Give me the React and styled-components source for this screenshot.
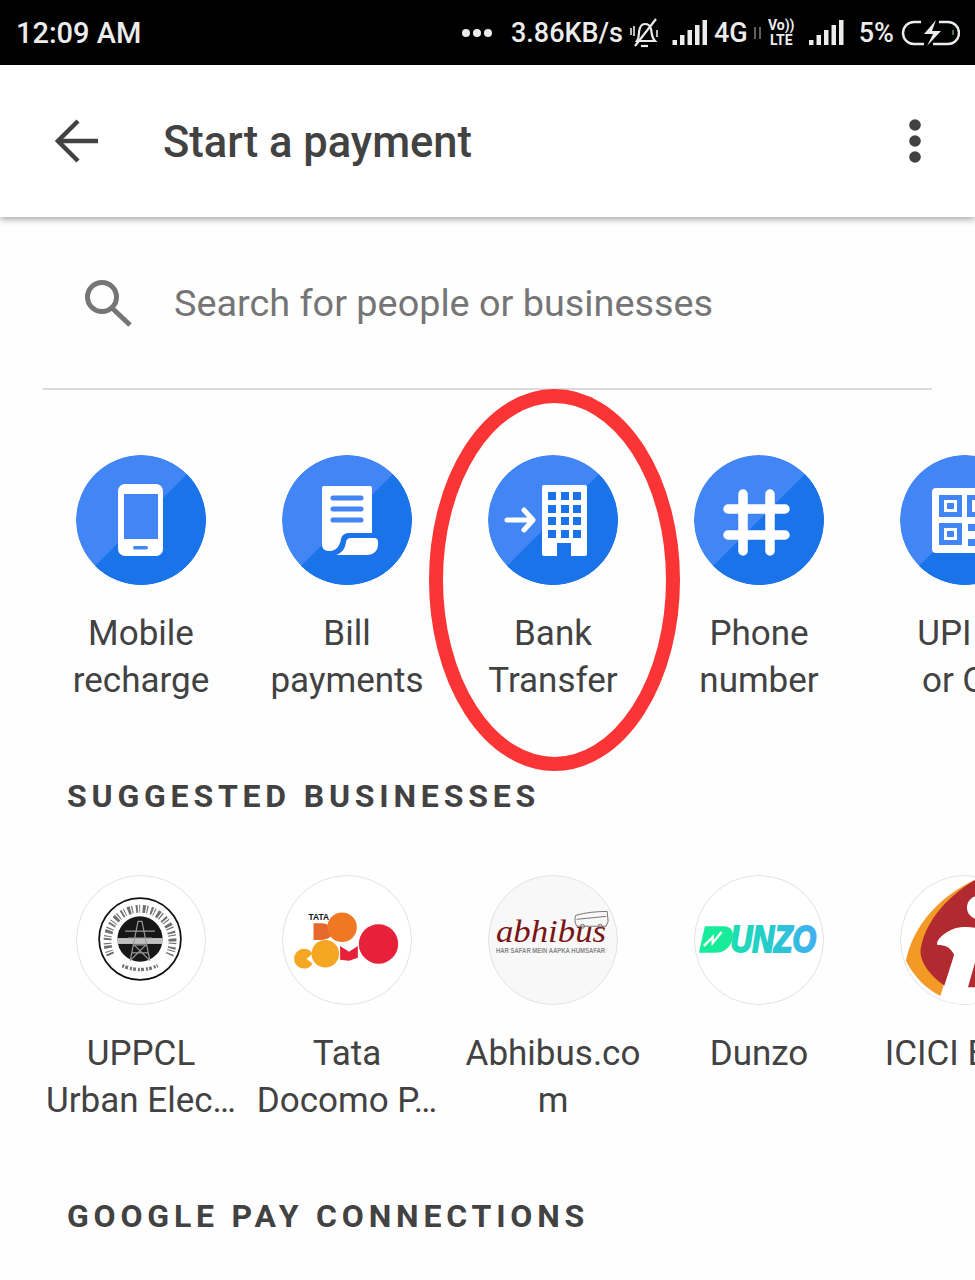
import styled, { createGlobalStyle } from 'styled-components'

const GlobalStyle = createGlobalStyle`
  html, body {
    background: #fff;
    margin: 0;
    padding: 0;
  }
`

const Page = styled.div`
  background: #fefefe;
  font-family: Roboto, "Liberation Sans", sans-serif;
  height: 1280px;
  overflow: hidden;
  position: relative;
  width: 975px;
`

const StatusBar = styled.div`
  align-items: center;
  background: #000;
  color: #ececec;
  display: flex;
  font-weight: 500;
  height: 65px;
  justify-content: space-between;
  padding: 0 15px 0 16px;
`

const Clock = styled.span`
  font-size: 29px;
`

const StatusIcons = styled.div`
  align-items: center;
  display: flex;
`

const StatusText = styled.span`
  font-size: ${props => props.$size || 27}px;
  margin-left: ${props => props.$gap || 0}px;
`

const StatusGlyph = styled.svg`
  display: block;
  flex: none;
  margin-left: ${props => props.$gap || 0}px;
`

const VoLteBox = styled.div`
  display: flex;
  flex-direction: column;
  font-size: 14px;
  font-weight: 700;
  line-height: 15px;
  margin-left: 5px;
  text-align: center;
  width: 29px;
`

const Header = styled.header`
  align-items: center;
  background: #fff;
  box-shadow: 0 3px 6px rgba(0, 0, 0, 0.3);
  display: flex;
  height: 152px;
  padding: 0 54px 0 55px;
  position: relative;
`

const Title = styled.h1`
  color: #424242;
  flex: 1;
  font-size: 43.5px;
  font-weight: 500;
  margin: 0 0 0 64px;
  padding-top: 3px;
`

const SearchRow = styled.div`
  align-items: center;
  box-sizing: border-box;
  display: flex;
  height: 171px;
  padding: 0 0 0 84px;
`

const Placeholder = styled.span`
  color: #757575;
  font-size: 37.8px;
  margin-left: 42px;
`

const Divider = styled.div`
  background: #dcdcdc;
  height: 2px;
  margin: 0 43px;
`

const TileRow = styled.div`
  display: flex;
  padding: ${props => props.$top}px 0 0 38px;
  width: 1100px;
`

const Tile = styled.div`
  align-items: center;
  display: flex;
  flex: none;
  flex-direction: column;
  width: 206px;
`

const Disc = styled.div`
  border-radius: 50%;
  box-sizing: border-box;
  flex: none;
  height: 130px;
  overflow: hidden;
  width: 130px;
  ${props => props.$outlined && `
    background: ${props.$tint || '#fff'};
    border: 1.5px solid #e2e2e2;
  `}
`

const DiscArt = styled.svg`
  display: block;
  height: 100%;
  width: 100%;
`

const TileLabel = styled.div`
  color: #424242;
  font-size: 35px;
  line-height: 47px;
  margin-top: 25px;
  text-align: center;
  white-space: nowrap;
`

const SectionHeading = styled.h2`
  color: #424242;
  font-size: 32px;
  font-weight: 700;
  height: 40px;
  letter-spacing: 4.8px;
  line-height: 40px;
  margin: 72px 0 0 67px;
`

const BusinessRowBox = styled(TileRow)`
  height: 249px;
`

const Annotation = styled.svg`
  left: 425px;
  pointer-events: none;
  position: absolute;
  top: 385px;
`

const BLUE_LIGHT = '#4285f4'
const BLUE_DARK = '#1a73e8'

const SignalBars = () => (
  <>
    <rect x='0' y='20' width='4.5' height='5' />
    <rect x='7.5' y='15' width='4.5' height='10' />
    <rect x='15' y='10' width='4.5' height='15' />
    <rect x='22.5' y='5' width='4.5' height='20' />
    <rect x='30' y='0' width='4.5' height='25' />
  </>
)

const VoLte = () => (
  <VoLteBox>
    <span>Vo))</span>
    <span>LTE</span>
  </VoLteBox>
)

const Status = () => (
  <StatusBar>
    <Clock>12:09 AM</Clock>
    <StatusIcons>
      <StatusGlyph width='30' height='10' viewBox='0 0 30 10' fill='#ececec'>
        <circle cx='4' cy='5' r='4' />
        <circle cx='15' cy='5' r='4' />
        <circle cx='26' cy='5' r='4' />
      </StatusGlyph>
      <StatusText $gap={19}>3.86KB/s</StatusText>
      <StatusGlyph $gap={6} width='30' height='34' viewBox='0 0 30 34' fill='none' stroke='#ececec' strokeWidth='2.2'>
        <path d='M8 25c3-4 1-9 3-13 1-3 3-4 5-4s5 1 6 5c1 4 0 8 4 12H8z' />
        <path d='M12 30h7' />
        <path d='M6 30L27 3' />
        <path d='M2 12v7M5 10v10M28 14v7' strokeWidth='1.6' />
      </StatusGlyph>
      <StatusGlyph $gap={13} width='36' height='25' viewBox='0 0 35 25' fill='#ececec'>
        <SignalBars />
      </StatusGlyph>
      <StatusText $gap={6}>4G</StatusText>
      <StatusGlyph $gap={5} width='9' height='14' viewBox='0 0 9 14' stroke='#777' strokeWidth='1.6'>
        <path d='M2 1v12M7 1v12' />
      </StatusGlyph>
      <VoLte />
      <StatusGlyph $gap={13} width='35' height='25' viewBox='0 0 35 25' fill='#ececec'>
        <SignalBars />
      </StatusGlyph>
      <StatusText $gap={15}>5%</StatusText>
      <StatusGlyph $gap={7} width='59' height='26' viewBox='0 0 59 26' fill='none'>
        <path d='M20 2H13a11 11 0 0 0 0 22h10M38 2h9a10 10 0 0 1 0 22H32' stroke='#ececec' strokeWidth='2.4' />
        <path d='M35 0L23 14h9l-6 12 14-15h-9z' fill='#ececec' />
        <rect x='51' y='10' width='2' height='5' fill='#3f7a3f' />
      </StatusGlyph>
    </StatusIcons>
  </StatusBar>
)

const TopBar = () => (
  <Header>
    <svg width='44' height='44' viewBox='0 0 44 44' fill='none' stroke='#424242' strokeWidth='4.5'>
      <path d='M43 22H4' />
      <path d='M23 2L3 22l20 20' />
    </svg>
    <Title>Start a payment</Title>
    <svg width='12' height='44' viewBox='0 0 12 44' fill='#424242'>
      <circle cx='6' cy='6' r='5.8' />
      <circle cx='6' cy='22' r='5.8' />
      <circle cx='6' cy='38' r='5.8' />
    </svg>
  </Header>
)

const Search = () => (
  <SearchRow>
    <svg width='48' height='48' viewBox='0 0 48 48' fill='none' stroke='#757575' strokeWidth='5'>
      <circle cx='18' cy='18' r='14.5' />
      <path d='M28 29l18 17' />
    </svg>
    <Placeholder>Search for people or businesses</Placeholder>
  </SearchRow>
)

const ActionDisc = ({ children }) => (
  <Disc>
    <DiscArt viewBox='0 0 130 130'>
      <circle cx='65' cy='65' r='65' fill={BLUE_LIGHT} />
      <path d='M111 19A65 65 0 0 1 19 111Z' fill={BLUE_DARK} />
      {children}
    </DiscArt>
  </Disc>
)

const PhoneIcon = () => (
  <>
    <rect x='42' y='29' width='45' height='72' rx='7' fill='#fff' />
    <rect x='48' y='39' width='34' height='45' fill={BLUE_LIGHT} />
    <rect x='57' y='91' width='15' height='3.5' rx='1.7' fill={BLUE_LIGHT} />
  </>
)

const BillIcon = () => (
  <>
    <path d='M42 31H88a2 2 0 0 1 2 2V78H66a7 7 0 0 0-7 6c-1 7-5 12-11 12h-2a6 6 0 0 1-6-6V33a2 2 0 0 1 2-2z' fill='#fff' />
    <path d='M68 83H92a4 4 0 0 1 4 4v3a10 10 0 0 1-10 10H54c6-2 9-6 10-13a5 5 0 0 1 4-4z' fill='#fff' />
    <path d='M51 43H79M51 54H79M51 65H79' stroke={BLUE_LIGHT} strokeWidth='5' strokeLinecap='round' />
  </>
)

const WINDOW_ROWS = [37, 50, 62, 75]
const WINDOW_COLS = [60, 73, 85]

const BankIcon = () => (
  <>
    <path d='M56 30H97a2 2 0 0 1 2 2V99a2 2 0 0 1-2 2H83V88H69V101H56a2 2 0 0 1-2-2V32a2 2 0 0 1 2-2z' fill='#fff' />
    {WINDOW_ROWS.map(y => WINDOW_COLS.map(x => (
      <rect key={`${x}-${y}`} x={x} y={y} width='8' height='8' fill={BLUE_DARK} />
    )))}
    <path d='M19 65H45M36 55l9 10-9 10' fill='none' stroke='#fff' strokeWidth='5' strokeLinecap='round' strokeLinejoin='round' />
  </>
)

const HashIcon = () => (
  <path
    d='M49 39V96M76 39V96M34 54H91M34 80H91'
    fill='none'
    stroke='#fff'
    strokeWidth='9.5'
    strokeLinecap='round'
  />
)

const QrFinder = ({ x, y }) => (
  <>
    <rect x={x} y={y} width='23' height='22' fill={BLUE_LIGHT} />
    <rect x={x + 5} y={y + 5} width='13' height='12' fill='#fff' />
    <rect x={x + 8} y={y + 8} width='7' height='6' fill={BLUE_LIGHT} />
  </>
)

const QrIcon = () => (
  <>
    <rect x='32' y='33' width='66' height='65' rx='4' fill='#fff' />
    <QrFinder x={39} y={40} />
    <QrFinder x={67} y={40} />
    <QrFinder x={39} y={68} />
    <path d='M68 69h7v7h-7zM68 84h7v7h-7z' fill={BLUE_LIGHT} />
  </>
)

const UppclLogo = () => (
  <DiscArt viewBox='0 0 130 130'>
    <circle cx='64' cy='64' r='41.5' fill='#fff' stroke='#111' strokeWidth='1.8' />
    <path d='M34 80A33 33 0 1 1 94 80' fill='none' stroke='#333' strokeWidth='8' strokeDasharray='2 1.4 1 2.6 3 1.2 1.2 3' opacity='0.7' />
    <path d='M46 91Q64 99 82 91' fill='none' stroke='#444' strokeWidth='3.5' strokeDasharray='2 1.2 3 2' opacity='0.75' />
    <circle cx='64' cy='64' r='23' fill='#171717' />
    <rect x='41' y='63' width='46' height='6' fill='#ddd' opacity='0.85' />
    <path d='M54 86L62 46h4l8 40M58 70h12M56 78h16M49 56h30M52 63h24M54 86l16-16M74 86L58 70' fill='none' stroke='#9a9a9a' strokeWidth='1.2' />
  </DiscArt>
)

const DocomoLogo = () => (
  <DiscArt viewBox='0 0 130 130'>
    <text x='26' y='45' fontFamily='"Liberation Sans", sans-serif' fontSize='8.5' fontWeight='700' fill='#111'>TATA</text>
    <path d='M31 48h8c8 0 12 6 12 9s-4 8-13 8h-7z' fill='#e4692a' />
    <circle cx='60' cy='52' r='15' fill='#f07823' />
    <path d='M30 79A10 10 0 1 0 30 89L24 84Z' fill='#f5a623' />
    <circle cx='43' cy='79' r='14' fill='#f5a623' />
    <path d='M58 71l9 6 9-6v12l-9 3-9-1z' fill='#e8213a' />
    <circle cx='97' cy='69' r='20' fill='#e8213a' />
  </DiscArt>
)

const AbhibusLogo = () => (
  <DiscArt viewBox='0 0 130 130'>
    <g fill='none' stroke='#666' strokeWidth='0.9'>
      <path d='M88 40c10-3 22-4 32-4l1 10-2 5H89c-2-4-2-8-1-11z' />
      <path d='M89 44l30-3' />
      <circle cx='95' cy='51' r='2' />
      <circle cx='113' cy='51' r='2' />
    </g>
    <text
      x='7'
      y='67'
      fontFamily='"Liberation Serif", serif'
      fontSize='33'
      fontStyle='italic'
      fill='#7a1515'
      textLength='112'
      lengthAdjust='spacingAndGlyphs'
    >
      abhibus
    </text>
    <text
      x='7'
      y='78'
      fontFamily='"Liberation Sans", sans-serif'
      fontSize='6.5'
      fontWeight='700'
      fill='#888'
      textLength='111'
      lengthAdjust='spacingAndGlyphs'
    >
      HAR SAFAR MEIN AAPKA HUMSAFAR
    </text>
  </DiscArt>
)

const DunzoLogo = () => (
  <DiscArt viewBox='0 0 130 130'>
    <defs>
      <linearGradient id='dunzoText' gradientUnits='userSpaceOnUse' x1='4' x2='124' y1='0' y2='0'>
        <stop offset='0' stopColor='#18eb9a' />
        <stop offset='0.55' stopColor='#22cfc8' />
        <stop offset='1' stopColor='#41aef2' />
      </linearGradient>
    </defs>
    <path d='M10 51h19c8 0 11 6 9 13-2 9-9 14-17 14H4z' fill='#18eb9a' />
    <path d='M9 71l9-9v6l9-11' fill='none' stroke='#fff' strokeWidth='2.4' />
    <text
      x='36'
      y='77.5'
      fontFamily='"Liberation Sans", sans-serif'
      fontSize='37'
      fontStyle='italic'
      fontWeight='700'
      fill='url(#dunzoText)'
      stroke='url(#dunzoText)'
      strokeWidth='2'
      textLength='87'
      lengthAdjust='spacingAndGlyphs'
    >
      UNZO
    </text>
  </DiscArt>
)

const IciciLogo = () => (
  <DiscArt viewBox='0 0 130 130'>
    <path d='M75 4C40 20 12 50 5 86c8 16 20 28 35 36z' fill='#f39a26' />
    <path d='M130 20C105 4 85 0 75 4 45 22 24 48 20 74c-2 14 12 30 28 40l20-2 62-12z' fill='#b02a30' />
    <path d='M40 124L54 80C50 72 45 70 37 70c-2-3 4-12 18-17 8-2 20-2 28 2l47 20v55H42z' fill='#fff' />
    <path d='M68 113l8-28c2-6 4-8 10-8h44v35z' fill='#b02a30' />
    <circle cx='79' cy='32' r='12' fill='#fff' />
  </DiscArt>
)

const ACTIONS = [
  { icon: <PhoneIcon />, label: ['Mobile', 'recharge'] },
  { icon: <BillIcon />, label: ['Bill', 'payments'] },
  { icon: <BankIcon />, label: ['Bank', 'Transfer'] },
  { icon: <HashIcon />, label: ['Phone', 'number'] },
  { icon: <QrIcon />, label: ['UPI ID', 'or QR'] }
]

const BUSINESSES = [
  { logo: <UppclLogo />, label: ['UPPCL', 'Urban Elec…'] },
  { logo: <DocomoLogo />, label: ['Tata', 'Docomo P…'] },
  { logo: <AbhibusLogo />, tint: '#f8f8f8', label: ['Abhibus.co', 'm'] },
  { logo: <DunzoLogo />, label: ['Dunzo'] },
  { logo: <IciciLogo />, label: ['ICICI Bank'] }
]

const Label = ({ lines }) => (
  <TileLabel>
    {lines.map(line => <div key={line}>{line}</div>)}
  </TileLabel>
)

const BusinessRow = () => (
  <BusinessRowBox $top={59}>
    {BUSINESSES.map(business => (
      <Tile key={business.label[0]}>
        <Disc $outlined $tint={business.tint}>{business.logo}</Disc>
        <Label lines={business.label} />
      </Tile>
    ))}
  </BusinessRowBox>
)

const App = () => (
  <Page>
    <GlobalStyle />
    <Status />
    <TopBar />
    <Search />
    <Divider />
    <TileRow $top={65}>
      {ACTIONS.map(action => (
        <Tile key={action.label[0]}>
          <ActionDisc>{action.icon}</ActionDisc>
          <Label lines={action.label} />
        </Tile>
      ))}
    </TileRow>
    <SectionHeading>SUGGESTED BUSINESSES</SectionHeading>
    <BusinessRow />
    <SectionHeading>GOOGLE PAY CONNECTIONS</SectionHeading>
    <Annotation width='260' height='390' viewBox='0 0 260 390' fill='none'>
      <ellipse cx='129.5' cy='195' rx='118.5' ry='184' stroke='#fb3535' strokeWidth='14' />
    </Annotation>
  </Page>
)

export default App
